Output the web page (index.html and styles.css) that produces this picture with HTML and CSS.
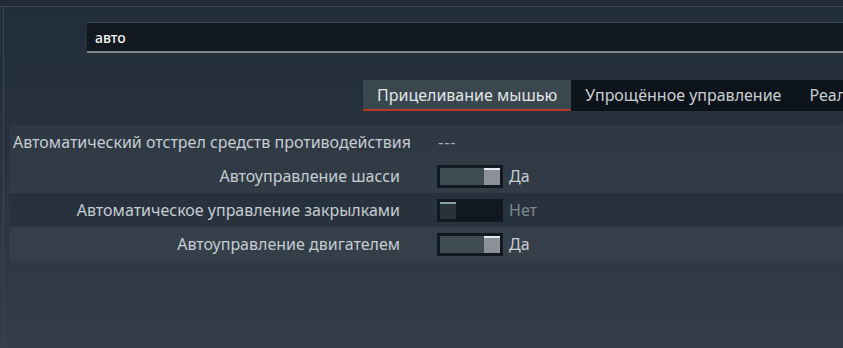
FILE: index.html
```html
<!DOCTYPE html>
<html lang="ru">
<head>
    <meta charset="UTF-8">
    <title>Настройки управления</title>
    <link rel="stylesheet" href="styles.css">
</head>
<body>
    <div class="topline"></div>
    <div class="panel">
        <div class="search">
            <input type="text" class="search-input" value="авто">
        </div>
        <div class="tabs">
            <div class="tab active">Прицеливание мышью</div>
            <div class="tab">Упрощённое управление</div>
            <div class="tab">Реалистичное управление</div>
        </div>
        <div class="options">
            <div class="row light first">
                <div class="label">Автоматический отстрел средств противодействия</div>
                <div class="value dash">---</div>
            </div>
            <div class="row light">
                <div class="label">Автоуправление шасси</div>
                <div class="value">
                    <span class="toggle on"><span class="knob"></span></span>
                    <span class="state">Да</span>
                </div>
            </div>
            <div class="row dark">
                <div class="label">Автоматическое управление закрылками</div>
                <div class="value">
                    <span class="toggle off"><span class="knob"></span></span>
                    <span class="state muted">Нет</span>
                </div>
            </div>
            <div class="row light">
                <div class="label">Автоуправление двигателем</div>
                <div class="value">
                    <span class="toggle on"><span class="knob"></span></span>
                    <span class="state">Да</span>
                </div>
            </div>
        </div>
    </div>
</body>
</html>
```

FILE: styles.css
```css
html, body {
    height: 100%;
}
body {
    margin: 0;
    padding: 0;
    overflow: hidden;
    font-family: "Noto Sans", "Open Sans", sans-serif;
    color: #c6ccd1;
    background: linear-gradient(180deg, #222d3a 0%, #27323e 40%, #333e48 100%);
}
.topline {
    height: 6px;
    border-bottom: 1px solid #3a4651;
    background: #212b37;
}
.panel {
    margin-left: 3px;
    border-left: 1px solid #384653;
    height: 100%;
}
.search {
    padding: 15px 0 0 83px;
}
.search-input {
    display: block;
    box-sizing: border-box;
    width: 100%;
    height: 31px;
    margin: 0;
    padding: 0 0 0 8px;
    border: none;
    border-top: 1px solid #3d4953;
    border-bottom: 2px solid #7b868f;
    background: #111820;
    color: #f2f4f5;
    font-family: "Noto Sans", sans-serif;
    font-size: 14px;
    font-weight: 500;
    outline: none;
}
.tabs {
    display: flex;
    margin: 27px 0 0 359px;
    background: #0d131a;
    white-space: nowrap;
    overflow: hidden;
}
.tab {
    height: 31px;
    line-height: 30px;
    padding: 0 14px;
    font-size: 16px;
    color: #c9ced2;
}
.tab.active {
    background: #3a474f;
    color: #e2e6e8;
    box-shadow: inset 0 -2px 0 #b63a1f;
}
.options {
    margin: 14px 0 0 6px;
}
.row {
    display: flex;
    align-items: center;
    height: 34px;
}
.row.light {
    background: rgba(255, 255, 255, 0.035);
}
.row.dark {
    background: rgba(0, 0, 0, 0.06);
}
.label {
    width: 387px;
    flex: none;
    padding-left: 3px;
    text-align: right;
    font-size: 16px;
    white-space: nowrap;
    overflow: hidden;
}
.row.first .label {
    width: 397px;
    text-align: left;
}
.value {
    display: flex;
    align-items: center;
    margin-left: 37px;
    font-size: 16px;
}
.row.first .value {
    margin-left: 28px;
}
.dash {
    color: #aab2b9;
    letter-spacing: 1px;
}
.toggle {
    display: block;
    box-sizing: border-box;
    width: 66px;
    height: 23px;
    border: 3px solid #111820;
    position: relative;
}
.toggle.on {
    background: #3f4c52;
}
.toggle.off {
    background: #111820;
}
.knob {
    position: absolute;
    top: 0;
    width: 16px;
    height: 17px;
    box-sizing: border-box;
}
.toggle.on .knob {
    right: 0;
    background: #8b9199;
    border-top: 2px solid #e6e9ea;
}
.toggle.off .knob {
    left: 0;
    background: #293238;
    border-top: 2px solid #86a3a6;
}
.state {
    margin-left: 6px;
    color: #c9ced2;
}
.state.muted {
    color: #7f878e;
}
```
